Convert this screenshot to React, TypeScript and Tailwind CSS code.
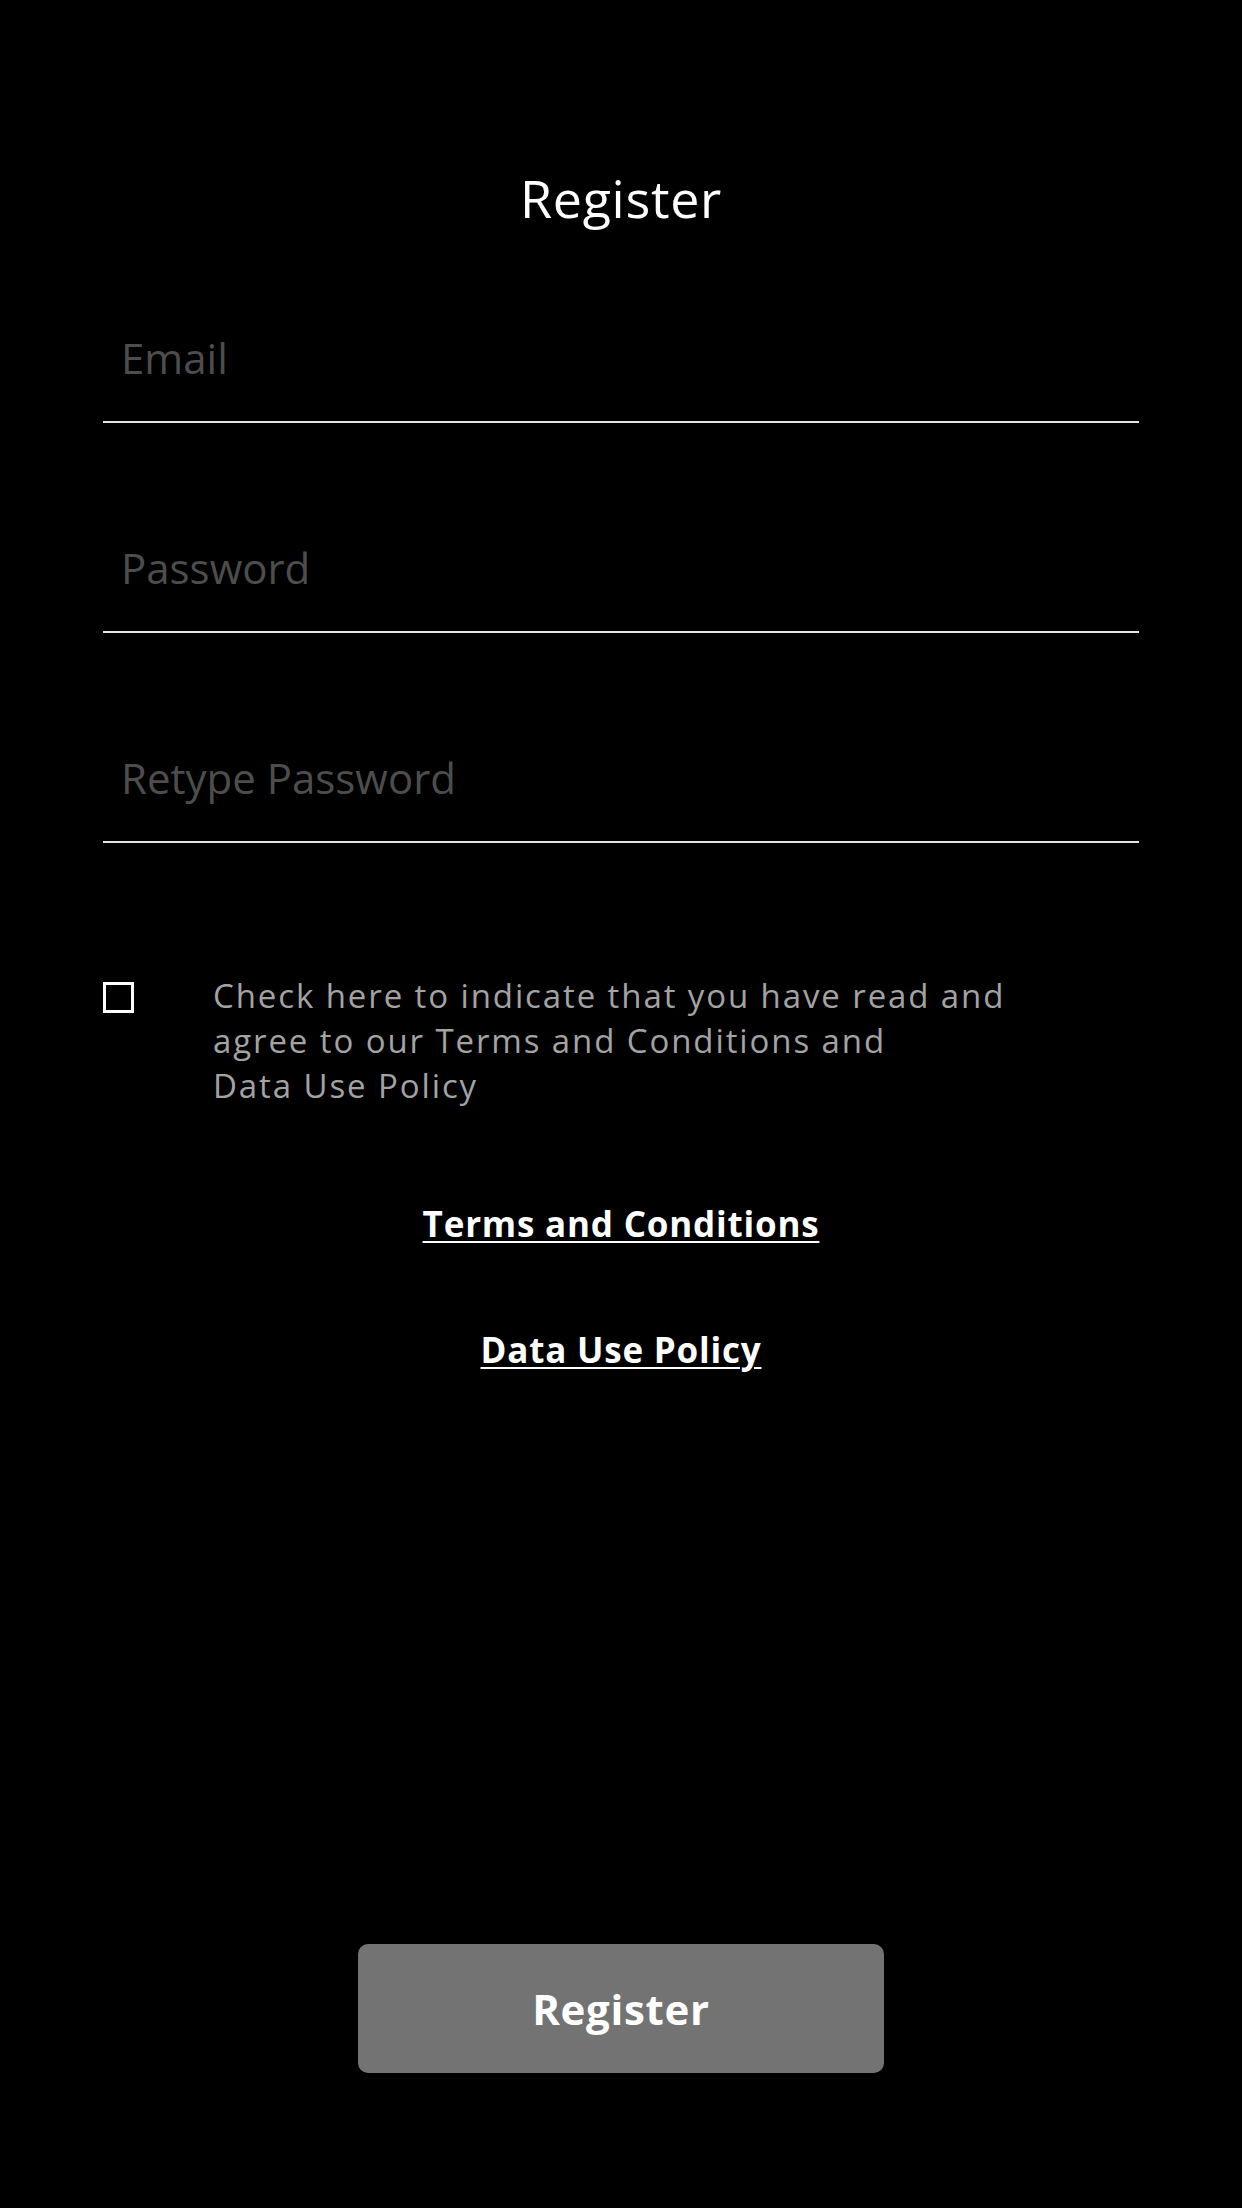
import React, { useState } from 'react';

const fields = [
  { name: 'email', type: 'email', placeholder: 'Email' },
  { name: 'password', type: 'password', placeholder: 'Password' },
  { name: 'retype', type: 'password', placeholder: 'Retype Password' },
];

const App: React.FC = () => {
  const [agreed, setAgreed] = useState(false);

  return (
    <div className="h-screen w-full bg-black flex flex-col px-[103px] font-['Open_Sans',sans-serif]">
      <h1 className="mt-[168px] text-center text-[52px] leading-[60px] font-normal tracking-[0.7px] text-white">Register</h1>

      <form className="mt-[95px] flex flex-col gap-[110px]">
        {fields.map((f) => (
          <input
            key={f.name}
            name={f.name}
            type={f.type}
            placeholder={f.placeholder}
            className="h-[100px] w-full bg-transparent border-b-2 border-[#e5e5e5] pl-[18px] pb-[30px] text-[42px] text-white placeholder:text-[#4d4d4d] outline-none"
          />
        ))}
      </form>

      <label className="mt-[130px] flex items-start">
        <input
          type="checkbox"
          checked={agreed}
          onChange={(e) => setAgreed(e.target.checked)}
          className="mt-[9px] w-[31px] h-[31px] shrink-0 appearance-none border-[3px] border-white bg-transparent checked:bg-white"
        />
        <span className="ml-[79px] text-[33px] leading-[45px] tracking-[1.9px] text-[#a3a3a3]">
          Check here to indicate that you have read and
          <br />
          agree to our Terms and Conditions and
          <br />
          Data Use Policy
        </span>
      </label>

      <div className="mt-[92px] flex flex-col items-center gap-[78px]">
        <a href="#" className="text-[35px] leading-[48px] font-bold tracking-[0.8px] text-white underline decoration-2 underline-offset-[4px]">
          Terms and Conditions
        </a>
        <a href="#" className="text-[35px] leading-[48px] font-bold tracking-[0.8px] text-white underline decoration-2 underline-offset-[4px]">
          Data Use Policy
        </a>
      </div>

      <div className="flex-1" />

      <div className="pb-[135px] flex justify-center">
        <button
          type="button"
          className="w-[526px] h-[129px] rounded-[10px] bg-[#737373] text-[42px] font-bold tracking-[0.7px] text-white"
        >
          Register
        </button>
      </div>
    </div>
  );
};

export default App;
